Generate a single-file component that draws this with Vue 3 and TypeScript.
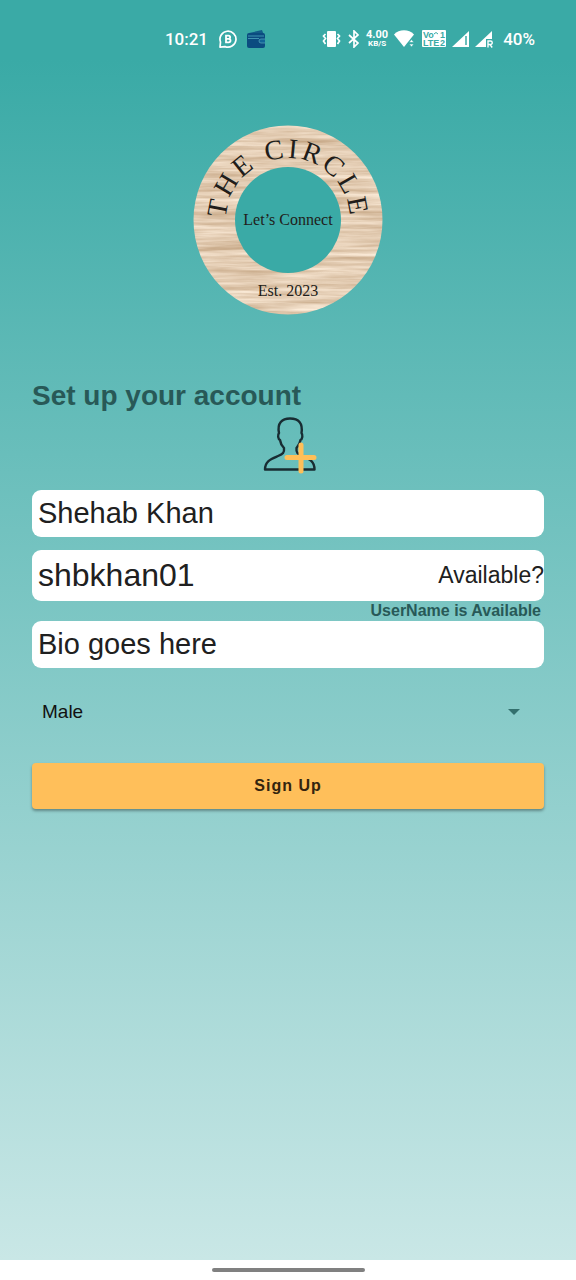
<script setup lang="ts">
import { ref } from 'vue'

const fullName = ref<string>('Shehab Khan')
const userName = ref<string>('shbkhan01')
const bio = ref<string>('Bio goes here')
const gender = ref<string>('Male')
const genders: string[] = ['Male', 'Female', 'Other']
</script>

<template>
  <div class="page">
    <header class="status">
      <div class="group">
        <span class="clock">10:21</span>
        <svg width="20" height="20" viewBox="0 0 20 20" aria-hidden="true">
          <path d="M2 18.200 2.500 13a8 8 0 1 1 4.500 4.600Z" fill="none" stroke="#fff" stroke-width="1.700" stroke-linejoin="round" />
          <path d="M8 6.600h2.500a1.600 1.600 0 0 1 0 3.300H8h2.800a1.700 1.700 0 0 1 0 3.400H8Z" fill="none" stroke="#fff" stroke-width="1.800" />
        </svg>
        <svg width="20" height="20" viewBox="0 0 20 20" aria-hidden="true">
          <path d="M3 4 16 1l1.500 4H3Z" fill="#125c88" />
          <rect x="1" y="4" width="18" height="15" rx="2" fill="#0b4c80" />
          <path d="M2 7h16M2 9.500h11" stroke="#3f94b0" stroke-width="1" />
          <path d="M19 10h-4a1.500 1.500 0 0 0 0 4h4" fill="#116497" stroke="#5aa9bd" stroke-width=".7" />
        </svg>
      </div>
      <div class="group indicators">
        <svg width="20" height="18" viewBox="0 0 20 18" aria-hidden="true">
          <rect x="5" y="1" width="9" height="16" rx="1" fill="#fff" />
          <path d="m3.500 4-2 2 2 2.500-2 2.500 2 3M15.500 4l2 2-2 2.500 2 2.500-2 3" fill="none" stroke="#fff" stroke-width="1.700" />
        </svg>
        <svg width="12" height="18" viewBox="0 0 12 18" aria-hidden="true">
          <path d="m1 5 9 8-4 4V1l4 4-9 8" fill="none" stroke="#fff" stroke-width="1.700" />
        </svg>
        <span class="speed"><b>4.00</b><small>KB/S</small></span>
        <svg width="22" height="18" viewBox="0 0 22 18" aria-hidden="true">
          <path d="M0 4.500a14 14 0 0 1 20 0L10 17Z" fill="#fff" />
          <path d="m15 12.500 2.500-3 2.500 3Zm0 1.500 2.500 3 2.500-3Z" fill="#fff" stroke="#3aaaa6" stroke-width=".7" />
        </svg>
        <svg width="24" height="18" viewBox="0 0 24 18" aria-hidden="true">
          <rect width="24" height="17" rx="1" fill="#fff" />
          <g class="volte">
            <text x="1" y="8">Vo</text>
            <text x="1" y="16">LTE</text>
            <text x="18" y="8">1</text>
            <text x="18" y="16">2</text>
          </g>
          <path d="M12 4q2-3 4 0" fill="none" stroke="#3aaaa6" />
        </svg>
        <svg width="17" height="18" viewBox="0 0 17 18" aria-hidden="true">
          <path d="M17 1v16H0Z" fill="#fff" />
          <path d="M14 6v9" stroke="#3aaaa6" stroke-width="1.500" />
        </svg>
        <svg width="18" height="18" viewBox="0 0 18 18" aria-hidden="true">
          <path d="M17 1v8h-6v8H0Z" fill="#fff" />
          <path d="M13 17.500V11h2.500a1.600 1.600 0 0 1 0 3.500H13m2 0 2.200 3" fill="none" stroke="#fff" stroke-width="1.400" />
        </svg>
        <span class="clock battery">40%</span>
      </div>
    </header>

    <main class="content">
      <svg class="logo" width="190" height="190" viewBox="0 0 190 190" role="img" aria-label="The Circle">
        <defs>
          <filter id="grain" x="0" y="0" width="100%" height="100%" color-interpolation-filters="sRGB">
            <feTurbulence type="fractalNoise" baseFrequency="0.012 0.22" numOctaves="4" seed="8" />
            <feColorMatrix values="0.3 0 0 0 0.74  0.38 0 0 0 0.61  0.46 0 0 0 0.47  0 0 0 0 1" />
            <feComposite in2="SourceGraphic" operator="in" />
          </filter>
          <path id="arc" d="M33 97v-2a62 62 0 0 1 124 0v2" />
        </defs>
        <circle cx="95" cy="95" r="94.500" fill="#e2c8aa" filter="url(#grain)" />
        <circle cx="95" cy="95" r="53" fill="#3aaaa6" />
        <text class="arc-text" text-anchor="middle"><textPath href="#arc" startOffset="50%">THE CIRCLE</textPath></text>
        <text class="motto" x="95" y="100" text-anchor="middle">Let’s Connect</text>
        <text class="motto" x="95" y="171" text-anchor="middle">Est. 2023</text>
      </svg>

      <h1>Set up your account</h1>

      <form @submit.prevent>
        <button class="avatar" type="button" aria-label="Add a photo">
          <svg width="60" height="58" viewBox="-4 0 60 58" aria-hidden="true">
            <path
              d="M3 53.500C3 45 9 43 16 40c5-2 6.500-3.500 6-8-3-3-3.500-4-4-8-2-1-2.500-5-1-7C15 7 20 2.500 28 2.500c9 0 13 5 11.500 14.500 1.500 2 1 6-1 7-.5 4-1.500 5-4 8-.5 4.500 1 6 6 8 7 3 12 5 12 13.500Z"
              fill="none" stroke="#182c32" stroke-width="2.400" stroke-linejoin="round"
            />
            <path d="M39 29v26M25 41.500h27" stroke="#ffbf58" stroke-width="5" stroke-linecap="round" />
          </svg>
        </button>

        <input v-model="fullName" class="field" type="text" aria-label="Full name" />
        <div class="field username">
          <input v-model="userName" type="text" aria-label="User name" />
          <button type="button">Available?</button>
        </div>
        <p class="hint">UserName is Available</p>
        <input v-model="bio" class="field bio" type="text" aria-label="Bio" />

        <div class="picker">
          <select v-model="gender" aria-label="Gender">
            <option v-for="g in genders" :key="g" :value="g">{{ g }}</option>
          </select>
          <svg width="12" height="6" viewBox="0 0 12 6" aria-hidden="true"><path d="M0 0h12L6 6Z" fill="#33706e" /></svg>
        </div>

        <button class="submit" type="submit">Sign Up</button>
      </form>
    </main>

    <footer class="navbar"><span class="handle"></span></footer>
  </div>
</template>

<style>
body {
  margin: 0;
}
</style>

<style scoped>
.page {
  display: flex;
  flex-direction: column;
  min-height: 100vh;
  background: linear-gradient(#3aaaa6 60px, #c9e7e6 calc(100% - 20px));
  font-family: "Liberation Sans", Arial, sans-serif;
  color: #202020;
}
svg {
  display: block;
  flex: none;
}
button,
input,
select {
  padding: 0;
  border: 0;
  background: none;
  color: inherit;
  font-family: inherit;
}
.status {
  display: flex;
  justify-content: flex-end;
  gap: 56px;
  padding: 28px 41px 0 0;
  color: #fff;
}
.group {
  display: flex;
  align-items: center;
  gap: 8px;
  height: 22px;
}
.indicators {
  gap: 6px;
}
.clock {
  margin-right: 2px;
  font: 500 17px/22px Roboto, sans-serif;
}
.battery {
  margin: 0 0 0 4px;
}
.speed {
  display: flex;
  flex-direction: column;
  align-items: center;
  font-family: Roboto, sans-serif;
}
.speed b {
  font-size: 11px;
  line-height: 10px;
}
.speed small {
  font-size: 8px;
  line-height: 8px;
  font-weight: 700;
}
.volte {
  font: 700 9px "Liberation Sans", sans-serif;
  fill: #3aaaa6;
}
.content {
  flex: 1;
  padding: 75px 32px 0;
}
.logo {
  margin: 0 auto;
}
.logo text {
  font-family: "Liberation Serif", serif;
  fill: #211d1a;
}
.logo .arc-text {
  font-size: 28px;
  letter-spacing: 3px;
}
.logo .motto {
  font-size: 16px;
}
h1 {
  margin: 63px 0 0;
  color: #285957;
  font-size: 28px;
  line-height: 36px;
}
form {
  display: flex;
  flex-direction: column;
}
.avatar {
  align-self: center;
  margin: 2px 0 16px;
}
.field {
  box-sizing: border-box;
  width: 100%;
  height: 47px;
  padding-left: 6px;
  border-radius: 9px;
  background: #fff;
  font-size: 29px;
}
.username {
  display: flex;
  align-items: center;
  height: 51px;
  margin-top: 13px;
}
.username input {
  flex: 1;
  min-width: 0;
  height: 100%;
  font-size: 32px;
}
.username button {
  font-size: 23px;
}
.hint {
  margin: 0;
  padding-right: 3px;
  color: #285957;
  font-size: 16px;
  font-weight: 700;
  line-height: 20px;
  text-align: right;
}
.picker {
  display: flex;
  align-items: center;
  position: relative;
  margin: 20px 0 28px;
}
.picker select {
  width: 100%;
  height: 47px;
  padding-left: 10px;
  appearance: none;
  color: #111;
  font-size: 19px;
}
.picker svg {
  position: absolute;
  right: 24px;
  pointer-events: none;
}
.submit {
  height: 46px;
  border-radius: 4px;
  background: #ffbf5a;
  box-shadow: 0 2px 3px rgb(0 0 0 / 35%);
  color: #33240e;
  font-size: 16px;
  font-weight: 700;
  letter-spacing: 1px;
}
.navbar {
  display: flex;
  align-items: center;
  justify-content: center;
  height: 20px;
  background: #fff;
}
.handle {
  width: 153px;
  height: 4px;
  border-radius: 2px;
  background: #808080;
}
</style>
